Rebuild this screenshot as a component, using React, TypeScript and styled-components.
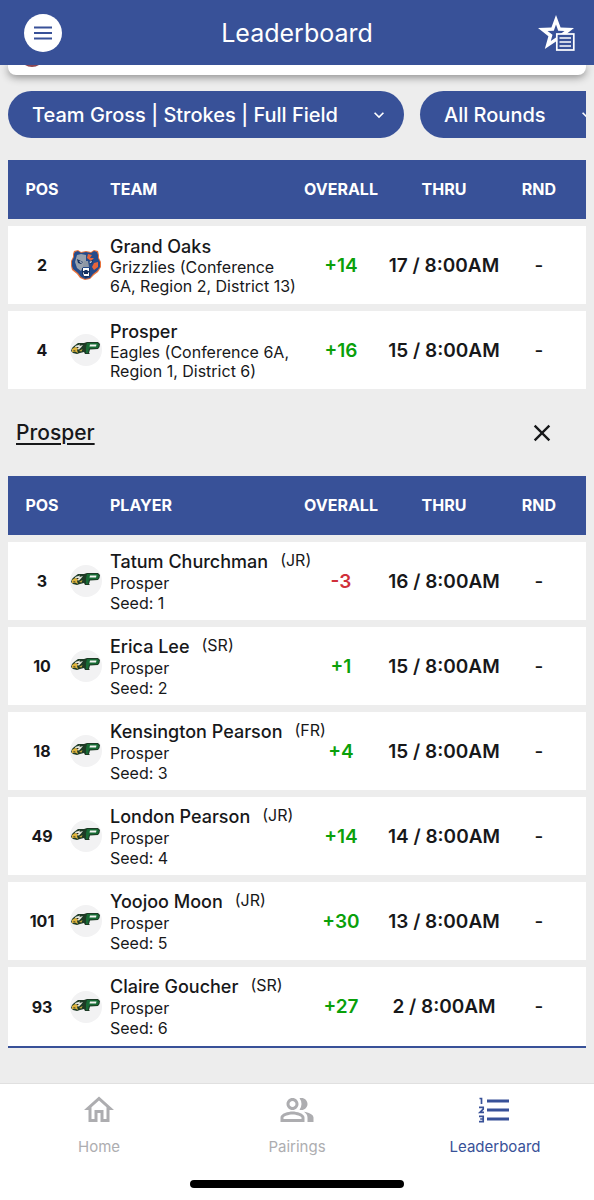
import React from "react";
import styled, { createGlobalStyle } from "styled-components";
import { MdOutlineHome, MdOutlinePeopleAlt, MdClose, MdKeyboardArrowDown } from "react-icons/md";

const BLUE = "#385198";

const GlobalStyle = createGlobalStyle`
  * { box-sizing: border-box; }
  body {
    margin: 0;
    background: #ededed;
    color: #17181a;
    font-family: Inter, "Liberation Sans", sans-serif;
  }
  button, select { font: inherit; color: inherit; border: 0; padding: 0; margin: 0; cursor: pointer; }
  a { color: inherit; }
`;

const Screen = styled.div`
  min-height: 100vh;
  display: flex;
  flex-direction: column;
`;

const TopBar = styled.header`
  display: grid;
  grid-template-columns: 48px 1fr 48px;
  align-items: center;
  height: 65px;
  padding: 0 14px 0 24px;
  background: ${BLUE};
  color: #fff;
`;

const Title = styled.h1`
  margin: 0;
  padding-right: 10px;
  text-align: center;
  font-size: 25px;
  line-height: 32px;
  font-weight: 400;
`;

const MenuButton = styled.button`
  display: grid;
  place-items: center;
  width: 38px;
  height: 38px;
  border-radius: 50%;
  background: #fff;
  color: ${BLUE};
`;

const FavoritesButton = styled.button`
  display: grid;
  place-items: center;
  justify-self: end;
  width: 48px;
  height: 48px;
  background: none;
`;

const Main = styled.main`
  flex: 1;
  padding: 0 8px 28px;
`;

const EventCard = styled.section`
  display: flex;
  height: 10px;
  padding-left: 16px;
  border-radius: 0 0 8px 8px;
  background: #fff;
  box-shadow: 0 2px 8px rgba(0, 0, 0, 0.45);
  clip-path: inset(0 -8px -16px -8px);
`;

const Filters = styled.div`
  display: flex;
  gap: 16px;
  margin: 16px 0 15px;
  overflow: hidden;
`;

const FilterBox = styled.div`
  position: relative;
  flex: none;
  color: #fff;
  svg {
    position: absolute;
    right: 15px;
    top: 14px;
    pointer-events: none;
  }
`;

const FilterSelect = styled.select`
  appearance: none;
  height: 47px;
  padding: 0 66px 0 24px;
  border-radius: 24px;
  background: ${BLUE};
  font-size: 20px;
  font-weight: 500;
`;

const Table = styled.table`
  width: 100%;
  table-layout: fixed;
  border-collapse: separate;
  border-spacing: 0 7px;
`;

const HeadCell = styled.th<{ $left?: boolean }>`
  height: 59px;
  padding: 0 0 2px;
  background: ${BLUE};
  color: #fff;
  font-size: 16px;
  font-weight: 700;
  text-align: ${(p) => (p.$left ? "left" : "center")};
  &:first-child { padding-left: 8px; }
  &:last-child { padding-right: 14px; }
`;

const Row = styled.tr<{ $last?: boolean }>`
  td {
    height: ${(p) => (p.$last ? 81 : 78)}px;
    border-bottom: ${(p) => (p.$last ? `2px solid ${BLUE}` : "0")};
  }
`;

const Cell = styled.td`
  padding: 0;
  background: #fff;
  text-align: center;
  font-size: 19px;
  font-weight: 600;
  white-space: nowrap;
`;

const PosCell = styled(Cell)`
  padding-left: 8px;
  font-size: 16px;
  font-weight: 700;
`;

const LogoCell = styled(Cell)`
  padding-right: 6px;
  svg { display: block; margin: 0 auto; }
`;

const NameCell = styled(Cell)`
  text-align: left;
  font-weight: 400;
`;

const ScoreCell = styled(Cell)<{ $under: boolean }>`
  color: ${(p) => (p.$under ? "#d0303a" : "#0aa00a")};
`;

const RoundCell = styled(Cell)`
  padding-right: 14px;
  font-weight: 500;
`;

const NameLine = styled.div`
  display: flex;
  gap: 12px;
  font-size: 18px;
  line-height: 23px;
  font-weight: 500;
`;

const Grade = styled.span`
  font-size: 16px;
  line-height: 20px;
  font-weight: 400;
`;

const SubLine = styled.div<{ $line: number }>`
  font-size: 16px;
  line-height: ${(p) => p.$line}px;
  white-space: normal;
`;

const TeamBar = styled.div`
  display: flex;
  align-items: center;
  justify-content: space-between;
  height: 73px;
  padding: 0 30px 0 8px;
`;

const TeamLink = styled.a`
  font-size: 21px;
  font-weight: 500;
  text-underline-offset: 3px;
  text-decoration-thickness: 2px;
`;

const CloseButton = styled.button`
  display: grid;
  background: none;
`;

const BottomNav = styled.nav`
  border-top: 1px solid #e0e0e0;
  background: #fff;
`;

const Tabs = styled.div`
  display: grid;
  grid-template-columns: repeat(3, 1fr);
  padding-top: 8px;
`;

const Tab = styled.a<{ $active?: boolean }>`
  display: flex;
  flex-direction: column;
  align-items: center;
  gap: 9px;
  color: ${(p) => (p.$active ? BLUE : "#adadb0")};
  font-size: 15px;
  line-height: 20px;
  text-decoration: none;
`;

const HomeIndicator = styled.div`
  width: 36%;
  height: 8px;
  margin: 23px auto 12px;
  border-radius: 4px;
  background: #000;
`;

const BearLogo = () => (
  <svg width="32" height="32" viewBox="0 0 32 32" role="img" aria-label="Grand Oaks">
    <path d="M4 2 L8 1 L11 3 L16 2 L21 3 L24 1 L28 2 L29 6 L29 9 L31 13 L31 18 L28 23 L24 26 L20 30 L15 31 L10 29 L7 25 L2 21 L1 17 L1 12 L3 8 L3 5Z" fill="#e8733c" />
    <path d="M5 3 L8 2 L11 4 L16 3 L21 4 L24 2 L27 3 L28 6 L28 9 L30 13 L30 18 L27 22 L23 25 L20 29 L15 30 L11 28 L8 24 L3 20 L2 17 L2 12 L4 8 L4 5Z" fill="#254b8b" />
    <path d="M7 6 L11 5 L16 6 L16 17 L13 18 L11 22 L7 19 L5 13Z" fill="#98a1ad" />
    <path d="M18 5 L22 6 L20 9 L24 9 L21 12 L17 9Z M24 14 L28 13 L28 18 L24 21 L22 18Z" fill="#e8653a" />
    <path d="M7 10 L13 13 L11 15 L8 14Z M18 13 L23 11 L22 15Z" fill="#173260" />
    <path d="M9 12 L12 13 L11 14Z M19 13 L22 12 L21 14Z" fill="#fff" />
    <path d="M14 12 L18 12 L19 18 L13 18Z" fill="#8d97a5" />
    <path d="M12 19 H20 V27 L16 29 L12 26Z" fill="#173260" />
    <path d="M13 19 H19 V22 H17.5 V21 H14.5 V22 H13Z M13 24 L14 23 V25 H18 V23 L19 24 V27 H14Z" fill="#fff" />
  </svg>
);

const EagleLogo = () => (
  <svg width="32" height="32" viewBox="0 0 32 32" role="img" aria-label="Prosper">
    <circle cx="16" cy="16" r="16" fill="#f2f2f3" />
    <path d="M4 12 L8 9 L14 9 L17 8 H28 L30 10 L29.5 13 L28 15 L20 15.5 L19 19 L20 20 H15 L14 18 L10 19 L7 20 L3 19 L1 17 L2 14Z" fill="#1d3a25" />
    <path d="M17 9 H27.5 L29 10.5 L28 14 L19 14.5 L18 19 H16 L16 13Z" fill="#176b35" />
    <path d="M20 10.5 H26.5 L26 12.5 H19.5Z" fill="#f3f5f2" />
    <path d="M5 12 L10 10.5 L9.5 12 L13 11 L11 13.5 L9 15.5 L6 15Z" fill="#e3e6dc" />
    <path d="M2 15 L5 13 L8 14 L7 16 L8 19 L5 17.5 L2 18Z" fill="#ddb43e" />
    <path d="M6 13 L9 13 L7.5 14.2Z M3 16 L6 16 L4 16.8Z" fill="#25231c" />
    <path d="M9 17 L12.5 15 L11.5 17.5Z" fill="#c9ad3d" />
  </svg>
);

const MenuIcon = () => (
  <svg width="20" height="14" viewBox="0 0 20 14" fill="none" stroke="currentColor" strokeWidth="1.8" aria-hidden="true">
    <path d="M1 1.5H19M1 7H19M1 12.5H19" />
  </svg>
);

const StarListIcon = () => (
  <svg width="40" height="40" viewBox="0 0 40 40" aria-hidden="true">
    <path fillRule="evenodd" d="M20 2 L24.6 14.4 L38 15 L27.6 23.2 L31.2 36 L20 28.6 L8.8 36 L12.4 23.2 L2 15 L15.4 14.4Z M20 11.5 L17.8 17.7 L11.5 17.9 L16.5 21.8 L14.8 28 L20 24.4 L25.2 28 L23.5 21.8 L28.5 17.9 L22.2 17.7Z" fill="#fff" />
    <rect x="20.8" y="21" width="17" height="16" fill={BLUE} stroke="#fff" strokeWidth="1.7" />
    <path d="M23.5 25H35M23.5 29H35M23.5 33H35" stroke="#fff" strokeWidth="1.6" />
  </svg>
);

const RankedListIcon = () => (
  <svg width="36" height="36" viewBox="0 0 36 36" fill="none" stroke="currentColor" aria-hidden="true">
    <path d="M10 9H32M10 18H32M10 27H32" strokeWidth="3" />
    <path d="M2.5 6.5H4.5V12 M2 15.4H6.2V17.2L3 20.3H7 M2 24.4H6.2V29.6H2 M3.2 27H6.2" strokeWidth="1.7" />
  </svg>
);

const CrestEdge = () => (
  <svg width="16" height="3" viewBox="0 0 16 3" aria-hidden="true">
    <path d="M1 0H15Q12 2 8 2T1 0Z" fill="#8d4650" />
  </svg>
);

type Entry = {
  pos: number;
  name: string;
  grade?: string;
  lines: string[];
  overall: string;
  thru: string;
  bear?: boolean;
};

const teams: Entry[] = [
  { pos: 2, name: "Grand Oaks", lines: ["Grizzlies (Conference 6A, Region 2, District 13)"], overall: "+14", thru: "17 / 8:00AM", bear: true },
  { pos: 4, name: "Prosper", lines: ["Eagles (Conference 6A, Region 1, District 6)"], overall: "+16", thru: "15 / 8:00AM" },
];

const players: Entry[] = [
  { pos: 3, name: "Tatum Churchman", grade: "(JR)", lines: ["Prosper", "Seed: 1"], overall: "-3", thru: "16 / 8:00AM" },
  { pos: 10, name: "Erica Lee", grade: "(SR)", lines: ["Prosper", "Seed: 2"], overall: "+1", thru: "15 / 8:00AM" },
  { pos: 18, name: "Kensington Pearson", grade: "(FR)", lines: ["Prosper", "Seed: 3"], overall: "+4", thru: "15 / 8:00AM" },
  { pos: 49, name: "London Pearson", grade: "(JR)", lines: ["Prosper", "Seed: 4"], overall: "+14", thru: "14 / 8:00AM" },
  { pos: 101, name: "Yoojoo Moon", grade: "(JR)", lines: ["Prosper", "Seed: 5"], overall: "+30", thru: "13 / 8:00AM" },
  { pos: 93, name: "Claire Goucher", grade: "(SR)", lines: ["Prosper", "Seed: 6"], overall: "+27", thru: "2 / 8:00AM" },
];

function ScoreTable({ label, entries, closed }: { label: string; entries: Entry[]; closed?: boolean }) {
  return (
    <Table>
      <colgroup>
        <col width="60" />
        <col width="42" />
        <col />
        <col width="82" />
        <col width="124" />
        <col width="80" />
      </colgroup>
      <thead>
        <tr>
          <HeadCell scope="col">POS</HeadCell>
          <HeadCell as="td" />
          <HeadCell scope="col" $left>{label}</HeadCell>
          <HeadCell scope="col">OVERALL</HeadCell>
          <HeadCell scope="col">THRU</HeadCell>
          <HeadCell scope="col">RND</HeadCell>
        </tr>
      </thead>
      <tbody>
        {entries.map((e, i) => (
          <Row key={e.pos} $last={closed && i === entries.length - 1}>
            <PosCell>{e.pos}</PosCell>
            <LogoCell>{e.bear ? <BearLogo /> : <EagleLogo />}</LogoCell>
            <NameCell>
              <NameLine>
                {e.name}
                {e.grade && <Grade>{e.grade}</Grade>}
              </NameLine>
              {e.lines.map((line) => (
                <SubLine key={line} $line={e.grade ? 20 : 19}>{line}</SubLine>
              ))}
            </NameCell>
            <ScoreCell $under={e.overall.startsWith("-")}>{e.overall}</ScoreCell>
            <Cell>{e.thru}</Cell>
            <RoundCell>-</RoundCell>
          </Row>
        ))}
      </tbody>
    </Table>
  );
}

function Filter({ label, value }: { label: string; value: string }) {
  return (
    <FilterBox>
      <FilterSelect aria-label={label} defaultValue={value}>
        <option>{value}</option>
      </FilterSelect>
      <MdKeyboardArrowDown size={20} aria-hidden="true" />
    </FilterBox>
  );
}

export default function App() {
  return (
    <Screen>
      <GlobalStyle />
      <TopBar>
        <MenuButton aria-label="Menu"><MenuIcon /></MenuButton>
        <Title>Leaderboard</Title>
        <FavoritesButton aria-label="Favorites"><StarListIcon /></FavoritesButton>
      </TopBar>
      <Main>
        <EventCard aria-label="Event"><CrestEdge /></EventCard>
        <Filters>
          <Filter label="Board" value="Team Gross | Strokes | Full Field" />
          <Filter label="Round" value="All Rounds" />
        </Filters>
        <ScoreTable label="TEAM" entries={teams} />
        <TeamBar>
          <TeamLink href="#prosper">Prosper</TeamLink>
          <CloseButton aria-label="Close team"><MdClose size={28} /></CloseButton>
        </TeamBar>
        <ScoreTable label="PLAYER" entries={players} closed />
      </Main>
      <BottomNav>
        <Tabs>
          <Tab href="#home"><MdOutlineHome size={36} />Home</Tab>
          <Tab href="#pairings"><MdOutlinePeopleAlt size={36} />Pairings</Tab>
          <Tab href="#leaderboard" $active><RankedListIcon />Leaderboard</Tab>
        </Tabs>
        <HomeIndicator />
      </BottomNav>
    </Screen>
  );
}
